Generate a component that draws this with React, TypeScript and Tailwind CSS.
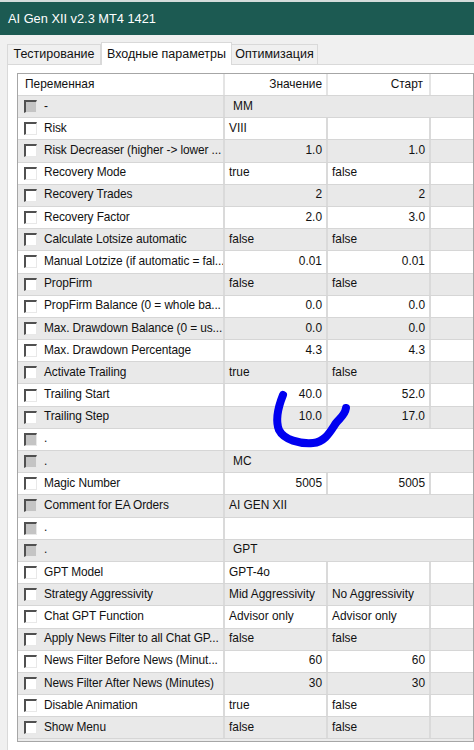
import React from 'react'

type Param = {
  name: string
  value?: string
  start?: string
  num?: boolean
  merged?: boolean
  section?: boolean
  off?: boolean
}

const params: Param[] = [
  { name: '-', value: 'MM', merged: true, section: true, off: true },
  { name: 'Risk', value: 'VIII', start: '' },
  { name: 'Risk Decreaser (higher -> lower ...', value: '1.0', start: '1.0', num: true },
  { name: 'Recovery Mode', value: 'true', start: 'false' },
  { name: 'Recovery Trades', value: '2', start: '2', num: true },
  { name: 'Recovery Factor', value: '2.0', start: '3.0', num: true },
  { name: 'Calculate Lotsize automatic', value: 'false', start: 'false' },
  { name: 'Manual Lotzize (if automatic = fal...', value: '0.01', start: '0.01', num: true },
  { name: 'PropFirm', value: 'false', start: 'false' },
  { name: 'PropFirm Balance (0 = whole ba...', value: '0.0', start: '0.0', num: true },
  { name: 'Max. Drawdown Balance (0 = us...', value: '0.0', start: '0.0', num: true },
  { name: 'Max. Drawdown Percentage', value: '4.3', start: '4.3', num: true },
  { name: 'Activate Trailing', value: 'true', start: 'false' },
  { name: 'Trailing Start', value: '40.0', start: '52.0', num: true },
  { name: 'Trailing Step', value: '10.0', start: '17.0', num: true },
  { name: '.', value: '', merged: true, section: true, off: true },
  { name: '.', value: 'MC', merged: true, section: true, off: true },
  { name: 'Magic Number', value: '5005', start: '5005', num: true },
  { name: 'Comment for EA Orders', value: 'AI GEN XII', merged: true, off: true },
  { name: '.', value: '', merged: true, section: true, off: true },
  { name: '.', value: 'GPT', merged: true, section: true, off: true },
  { name: 'GPT Model', value: 'GPT-4o', start: '' },
  { name: 'Strategy Aggressivity', value: 'Mid Aggressivity', start: 'No Aggressivity' },
  { name: 'Chat GPT Function', value: 'Advisor only', start: 'Advisor only' },
  { name: 'Apply News Filter to all Chat GP...', value: 'false', start: 'false' },
  { name: 'News Filter Before News (Minut...', value: '60', start: '60', num: true },
  { name: 'News Filter After News (Minutes)', value: '30', start: '30', num: true },
  { name: 'Disable Animation', value: 'true', start: 'false' },
  { name: 'Show Menu', value: 'false', start: 'false' },
]

function CheckBox({ off }: { off?: boolean }) {
  return (
    <div
      className={`w-[13px] h-[13px] shrink-0 border-t-2 border-l-2 border-t-[#505050] border-l-[#505050] border-b border-r border-b-[#e8e8e8] border-r-[#e8e8e8] ${
        off ? 'bg-[#c4c4c4]' : 'bg-white'
      }`}
    />
  )
}

function ParamRow({ p, idx }: { p: Param; idx: number }) {
  const bg = idx % 2 === 0 ? 'bg-[#e9e9e9]' : 'bg-white'
  return (
    <div className={`flex h-[22.2px] border-b border-[#d6d6d6] ${bg}`}>
      <div className="w-[207px] shrink-0 flex items-center gap-[7px] pl-[6px] border-r-2 border-[#dadada] overflow-hidden whitespace-nowrap">
        <CheckBox off={p.off} />
        <span className="tracking-[-0.1px]">{p.name}</span>
      </div>
      {p.merged ? (
        <div className={`flex-1 flex items-center ${p.section ? 'pl-[8px]' : 'pl-[4px]'}`}>{p.value}</div>
      ) : (
        <>
          <div
            className={`w-[103px] shrink-0 flex items-center border-r-2 border-[#dadada] px-[4px] whitespace-nowrap ${
              p.num ? 'justify-end' : ''
            }`}
          >
            {p.value}
          </div>
          <div
            className={`w-[103px] shrink-0 flex items-center border-r-2 border-[#dadada] px-[4px] whitespace-nowrap ${
              p.num ? 'justify-end' : ''
            }`}
          >
            {p.start}
          </div>
          <div className="flex-1" />
        </>
      )}
    </div>
  )
}

export default function App() {
  return (
    <div
      className="relative w-[474px] h-[750px] overflow-hidden bg-[#f0f0f0] text-[#111]"
      style={{ fontFamily: '"Liberation Sans", Arial, sans-serif' }}
    >
      {/* Title bar */}
      <div className="h-[2px] bg-[#d4dcdb]" />
      <div className="h-[33px] bg-[#1c5a52] flex items-center pl-[8px] text-white text-[12.8px]">
        AI Gen XII v2.3 MT4 1421
      </div>

      {/* Tabs */}
      <div className="pl-[7px] pt-[7px]">
        <div className="flex items-end h-[22px] text-[12.5px]">
          <div className="h-[20px] w-[94px] flex items-center justify-center border border-b-0 border-[#d9d9d9] bg-[#f0f0f0]">
            Тестирование
          </div>
          <div className="relative z-10 -mb-px h-[23px] w-[131px] flex items-center justify-center border border-b-0 border-[#d9d9d9] bg-white">
            Входные параметры
          </div>
          <div className="h-[20px] w-[86px] flex items-center justify-center border border-b-0 border-l-0 border-[#d9d9d9] bg-[#f0f0f0]">
            Оптимизация
          </div>
        </div>

        {/* Panel */}
        <div className="bg-white border-l border-t border-[#d9d9d9] pl-[9px] pt-[8px] h-[700px]">
          <div className="border border-[#a6a6a6] bg-[#ececec] pb-[2px] text-[11.9px]">
            <div className="flex h-[22px] bg-white border-b border-[#d6d6d6]">
              <div className="w-[207px] shrink-0 flex items-center pl-[7px] border-r-2 border-[#e4e4e4]">
                Переменная
              </div>
              <div className="w-[103px] shrink-0 flex items-center justify-end pr-[4px] border-r-2 border-[#e4e4e4]">
                Значение
              </div>
              <div className="w-[103px] shrink-0 flex items-center justify-end pr-[6px] border-r-2 border-[#e4e4e4]">
                Старт
              </div>
              <div className="flex-1" />
            </div>
            {params.map((p, i) => (
              <ParamRow key={i} p={p} idx={i} />
            ))}
          </div>
        </div>
      </div>

      {/* hand-drawn marker */}
      <svg className="absolute left-0 top-0 pointer-events-none" width="474" height="750">
        <path
          d="M283 395 C279 405 275 420 279 430 C284 440 300 444 313 443 C325 442 330 432 336 423 C340 418 345 415 346 408"
          fill="none"
          stroke="#0000f0"
          strokeWidth="8"
          strokeLinecap="round"
          strokeLinejoin="round"
        />
      </svg>
    </div>
  )
}
